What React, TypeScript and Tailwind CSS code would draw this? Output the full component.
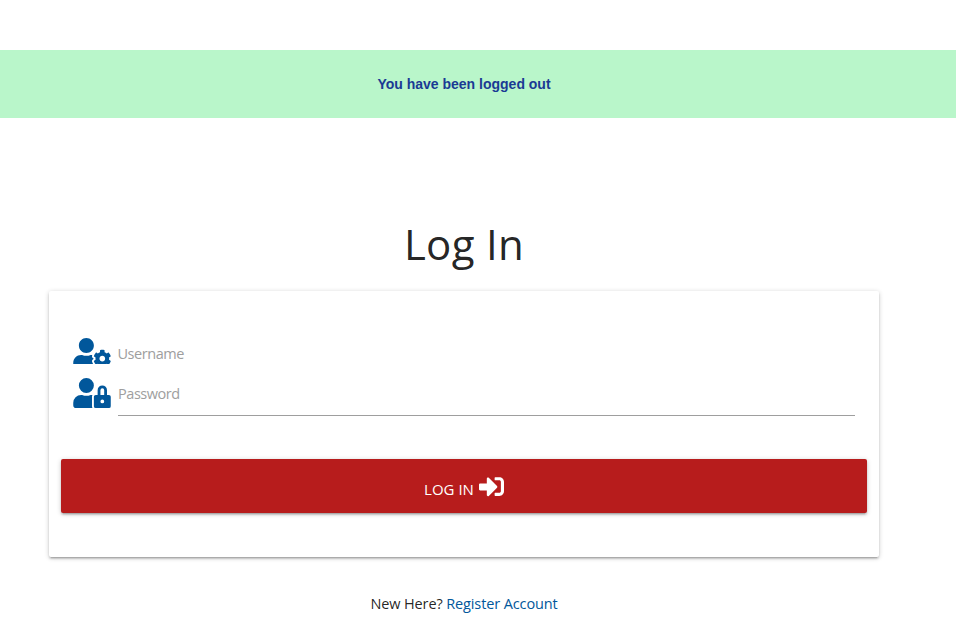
import { FaUserCog, FaUserLock, FaSignInAlt } from "react-icons/fa";

export default function App() {
  return (
    <div className="h-[641px] overflow-hidden bg-white pt-[50px] font-['Open_Sans',sans-serif] text-[15px] text-black/87">
      <div className="flex h-[68px] items-center justify-center bg-[#b9f6ca] pr-[28px] font-['Liberation_Sans',sans-serif] text-[14px] font-bold text-[#1a3a94]">
        <span>You have been logged out</span>
      </div>
      <main className="ml-[49px] w-[830px] pt-[97px]">
        <h1 className="flex h-[58px] items-center justify-center text-[42px] leading-none tracking-[0.3px]">
          <span>Log In</span>
        </h1>
        <form className="mt-[18px] h-[266px] rounded-[2px] px-3 pt-[43px] shadow-[0_2px_2px_0_rgba(0,0,0,0.14),0_3px_1px_-2px_rgba(0,0,0,0.12),0_1px_5px_0_rgba(0,0,0,0.2)]">
          <div className="flex h-10 pl-[11.5px] text-[#9e9e9e]">
            <div className="mt-[4px] h-[26px] overflow-hidden">
              <FaUserCog className="h-[30px] w-[38px] text-[#01579b]" />
            </div>
            <span className="ml-[7px] mt-[10px] text-[14.5px] leading-5 tracking-[-0.45px]">Username</span>
          </div>
          <div className="flex h-[42px] pl-[11.5px] pr-3 text-[#9e9e9e]">
            <FaUserLock className="mt-[4px] h-[30px] w-[38px] text-[#01579b]" />
            <div className="ml-[7.5px] h-[42px] flex-1 border-b border-[#9e9e9e] pt-[10px] text-[14.5px] leading-5 tracking-[-0.45px]">Password</div>
          </div>
          <button type="button" className="mt-[43px] flex h-[54px] w-full items-center justify-center rounded-[2px] bg-[#b71c1c] text-white shadow-[0_2px_2px_0_rgba(0,0,0,0.14),0_3px_1px_-2px_rgba(0,0,0,0.12),0_1px_5px_0_rgba(0,0,0,0.2)]">
            <span className="mt-[6px]">LOG IN</span>
            <FaSignInAlt className="ml-[5px] size-[25px]" />
          </button>
        </form>
        <p className="mt-[36px] text-center text-[14.5px] leading-[22px] tracking-[-0.12px]">
          <span>New Here? </span><a className="text-[#01579b]">Register Account</a>
        </p>
      </main>
    </div>
  );
}
